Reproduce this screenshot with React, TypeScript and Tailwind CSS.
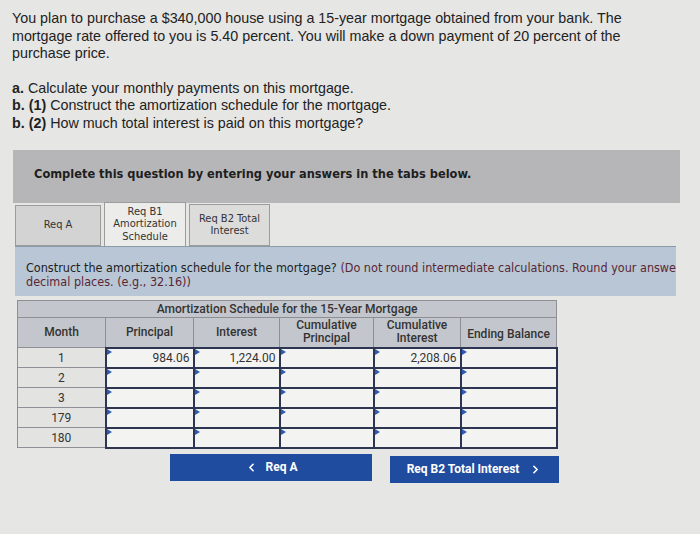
import React from 'react';
import { ChevronLeft, ChevronRight } from 'lucide-react';

const rows = [
  { month: '1', principal: '984.06', interest: '1,224.00', cumPrincipal: '', cumInterest: '2,208.06', ending: '' },
  { month: '2', principal: '', interest: '', cumPrincipal: '', cumInterest: '', ending: '' },
  { month: '3', principal: '', interest: '', cumPrincipal: '', cumInterest: '', ending: '' },
  { month: '179', principal: '', interest: '', cumPrincipal: '', cumInterest: '', ending: '' },
  { month: '180', principal: '', interest: '', cumPrincipal: '', cumInterest: '', ending: '' },
];

function InputCell({ value }: { value: string }) {
  return (
    <td className="relative h-[20px] border-2 border-[#2c3552] bg-[#f3f3f2] px-[3px] text-right">
      <span className="absolute left-0 top-0 h-0 w-0 border-y-[3px] border-l-[5px] border-y-transparent border-l-[#2f5bb0]" />
      {value}
    </td>
  );
}

export default function App() {
  return (
    <div className="min-h-screen bg-[#e6e6e4] px-[12px] pb-10 pt-[10px] text-[#222]" style={{ fontFamily: '"Liberation Sans", Arial, sans-serif' }}>
      {/* Question */}
      <div className="text-[14.3px] leading-[17.5px]">
        <p>
          You plan to purchase a $340,000 house using a 15-year mortgage obtained from your bank. The<br />
          mortgage rate offered to you is 5.40 percent. You will make a down payment of 20 percent of the<br />
          purchase price.
        </p>
        <div className="mt-[17px]">
          <div><b>a.</b> Calculate your monthly payments on this mortgage.</div>
          <div><b>b. (1)</b> Construct the amortization schedule for the mortgage.</div>
          <div><b>b. (2)</b> How much total interest is paid on this mortgage?</div>
        </div>
      </div>

      <div style={{ fontFamily: '"DejaVu Sans Condensed", "DejaVu Sans", Tahoma, sans-serif' }}>
        {/* Instructions band */}
        <div className="ml-[1px] mt-[18px] h-[53px] w-[667px] bg-[#b6b6b8] pl-[21px] pt-[14px] text-[12.7px] font-bold text-[#1e1e1e]">
          Complete this question by entering your answers in the tabs below.
        </div>

        {/* Tabs */}
        <div className="ml-[3px] mt-[-1px] flex items-end gap-[3px] text-[11px] leading-[12.5px] text-[#333]">
          <div className="flex h-[41px] w-[86px] items-center justify-center border border-[#9c9c9c] bg-[#d3d3d3]">Req A</div>
          <div className="flex h-[44px] w-[82px] items-center justify-center border border-b-0 border-[#9c9c9c] bg-[#ececea] text-center">
            Req B1<br />Amortization<br />Schedule
          </div>
          <div className="flex h-[42px] w-[81px] items-center justify-center border border-[#9c9c9c] bg-[#dcdcdb] text-center">
            Req B2 Total<br />Interest
          </div>
        </div>

        {/* Prompt */}
        <div className="ml-[3px] h-[50px] w-[661px] overflow-hidden border-t border-[#8e9aa8] bg-[#b8c6d5] pl-[11px] pt-[14px] text-[12.5px] leading-[13.5px]">
          <div className="whitespace-nowrap">
            <span className="text-[#222]">Construct the amortization schedule for the mortgage? </span>
            <span className="text-[#5b2633]">(Do not round intermediate calculations. Round your answers to 2</span>
          </div>
          <div className="whitespace-nowrap text-[#5b2633]">decimal places. (e.g., 32.16))</div>
        </div>
      </div>

      {/* Schedule table */}
      <div className="ml-[5px] mt-[4px]" style={{ fontFamily: 'Roboto, "Liberation Sans", sans-serif' }}>
        <table className="border-collapse text-[12px] text-[#333]">
          <colgroup>
            <col className="w-[88px]" />
            <col className="w-[88px]" />
            <col className="w-[86px]" />
            <col className="w-[94px]" />
            <col className="w-[87px]" />
            <col className="w-[96px]" />
          </colgroup>
          <thead>
            <tr>
              <th colSpan={6} className="h-[17px] border border-[#8d8f94] bg-[#c3c6cc] text-center font-medium leading-[15px]">
                Amortization Schedule for the 15-Year Mortgage
              </th>
            </tr>
            <tr className="font-medium leading-[13px]">
              <th className="h-[30px] border border-[#8d8f94] bg-[#c3c6cc] font-medium">Month</th>
              <th className="border border-[#8d8f94] bg-[#c3c6cc] font-medium">Principal</th>
              <th className="border border-[#8d8f94] bg-[#c3c6cc] font-medium">Interest</th>
              <th className="border border-[#8d8f94] bg-[#c3c6cc] font-medium">Cumulative<br />Principal</th>
              <th className="border border-[#8d8f94] bg-[#c3c6cc] font-medium">Cumulative<br />Interest</th>
              <th className="border border-[#8d8f94] bg-[#c3c6cc] pt-[5px] font-medium">Ending Balance</th>
            </tr>
          </thead>
          <tbody>
            {rows.map(r => (
              <tr key={r.month}>
                <td className="h-[20px] border border-[#8d8f94] bg-[#e3e3e2] text-center">{r.month}</td>
                <InputCell value={r.principal} />
                <InputCell value={r.interest} />
                <InputCell value={r.cumPrincipal} />
                <InputCell value={r.cumInterest} />
                <InputCell value={r.ending} />
              </tr>
            ))}
          </tbody>
        </table>

        {/* Navigation */}
        <div className="mt-[5px] flex gap-[18px] pl-[153px] text-[12px] font-bold text-white">
          <button className="flex h-[27px] w-[202px] items-center justify-center gap-[8px] bg-[#1f4c9f]">
            <ChevronLeft className="h-[13px] w-[13px]" strokeWidth={3} />
            Req A
          </button>
          <button className="mt-[2px] flex h-[27px] w-[169px] items-center justify-center gap-[10px] bg-[#1f4c9f]">
            Req B2 Total Interest
            <ChevronRight className="h-[13px] w-[13px]" strokeWidth={3} />
          </button>
        </div>
      </div>
    </div>
  );
}
